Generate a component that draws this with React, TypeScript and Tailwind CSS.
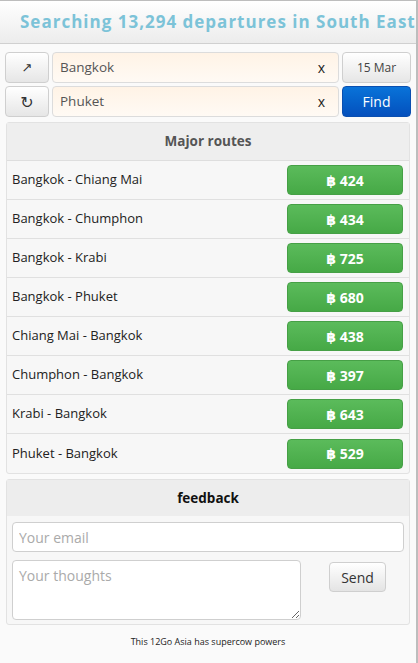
import { useState } from "react";

type Route = {
  name: string;
  price: number;
};

const routes: Route[] = [
  { name: "Bangkok - Chiang Mai", price: 424 },
  { name: "Bangkok - Chumphon", price: 434 },
  { name: "Bangkok - Krabi", price: 725 },
  { name: "Bangkok - Phuket", price: 680 },
  { name: "Chiang Mai - Bangkok", price: 438 },
  { name: "Chumphon - Bangkok", price: 397 },
  { name: "Krabi - Bangkok", price: 643 },
  { name: "Phuket - Bangkok", price: 529 },
];

const font = "font-['Open_Sans','DejaVu_Sans',sans-serif]";

function CityInput({ value }: { value: string }) {
  return (
    <div className="flex h-[31px] flex-1 items-center rounded-[4px] border border-[#dcdcdc] bg-gradient-to-b from-[#fff3e6] to-[#fffaf4] pl-[7px] pr-[13px]">
      <span className="flex-1 text-[13.5px] text-[#555]">{value}</span>
      <span className="text-[14px] text-[#222]">x</span>
    </div>
  );
}

export default function App() {
  const [email, setEmail] = useState("");
  const [thoughts, setThoughts] = useState("");

  return (
    <div className={`${font} h-[663px] w-[418px] overflow-hidden border-r-2 border-t border-[#bdbdbd] bg-[#fafafa]`}>
      <header className="flex h-[43px] items-center overflow-hidden whitespace-nowrap border-b border-[#d0d0d0] bg-gradient-to-b from-white to-[#ececec] pl-[20px]">
        <h1 className="text-[17px] font-bold tracking-[1px] text-[#7cc3d8]">
          Searching 13,294 departures in South East
        </h1>
      </header>

      <div className="grid grid-cols-[44px_1fr_69px] gap-x-[3px] gap-y-[3px] px-[5px] pt-[8px]">
        <button className="flex h-[31px] items-center justify-center rounded-[4px] border border-[#cfcfcf] bg-gradient-to-b from-white to-[#e6e6e6] text-[13px] text-[#333]">
          ↗
        </button>
        <CityInput value="Bangkok" />
        <button className="h-[31px] rounded-[4px] border border-[#cfcfcf] bg-gradient-to-b from-white to-[#e6e6e6] text-[12px] text-[#444]">
          15 Mar
        </button>
        <button className="flex h-[31px] items-center justify-center rounded-[4px] border border-[#cfcfcf] bg-gradient-to-b from-white to-[#e6e6e6] text-[16px] text-[#333]">
          ↻
        </button>
        <CityInput value="Phuket" />
        <button className="h-[31px] rounded-[4px] border border-[#0a4fb0] bg-gradient-to-b from-[#0a73d9] to-[#0550bd] text-[14px] text-white">
          Find
        </button>
      </div>

      <section className="mx-[6px] mt-[5px] rounded-[3px] border border-[#e2e2e2] bg-[#f7f7f7]">
        <div className="flex h-[38px] items-center justify-center border-b border-[#dedede] bg-[#eeeeee] text-[13.5px] font-bold text-[#555]">
          Major routes
        </div>
        {routes.map((route) => (
          <div
            key={route.name}
            className="flex h-[39px] items-center justify-between border-b border-[#e0e0e0] pl-[5px] pr-[6px] last:border-b-0"
          >
            <span className="text-[13px] text-[#222]">{route.name}</span>
            <button className="h-[30px] w-[116px] rounded-[4px] border border-[#46a046] bg-gradient-to-b from-[#5bbb5b] to-[#46a946] text-[14px] font-bold text-white">
              ฿ {route.price}
            </button>
          </div>
        ))}
      </section>

      <section className="mx-[6px] mt-[5px] rounded-[3px] border border-[#e2e2e2] bg-[#f7f7f7]">
        <div className="flex h-[36px] items-center justify-center bg-[#ededed] text-[13.5px] font-bold text-[#111]">
          feedback
        </div>
        <div className="px-[5px] pb-[4px] pt-[6px]">
          <input
            value={email}
            onChange={(e) => setEmail(e.target.value)}
            placeholder="Your email"
            className="h-[30px] w-full rounded-[4px] border border-[#cfcfcf] bg-white px-[6px] text-[14px] text-[#333] placeholder:text-[#aaa] outline-none"
          />
          <div className="mt-[8px] flex items-start">
            <textarea
              value={thoughts}
              onChange={(e) => setThoughts(e.target.value)}
              placeholder="Your thoughts"
              className="h-[60px] w-[289px] rounded-[4px] border border-[#cfcfcf] bg-white px-[6px] py-[4px] text-[14px] text-[#333] placeholder:text-[#aaa] outline-none"
            />
            <button className="ml-[28px] mt-[2px] h-[30px] w-[57px] rounded-[4px] border border-[#cfcfcf] bg-gradient-to-b from-white to-[#e4e4e4] text-[14px] text-[#333]">
              Send
            </button>
          </div>
        </div>
      </section>

      <footer className="pt-[10px] text-center text-[9px] text-[#222]">
        This 12Go Asia has supercow powers
      </footer>
    </div>
  );
}
